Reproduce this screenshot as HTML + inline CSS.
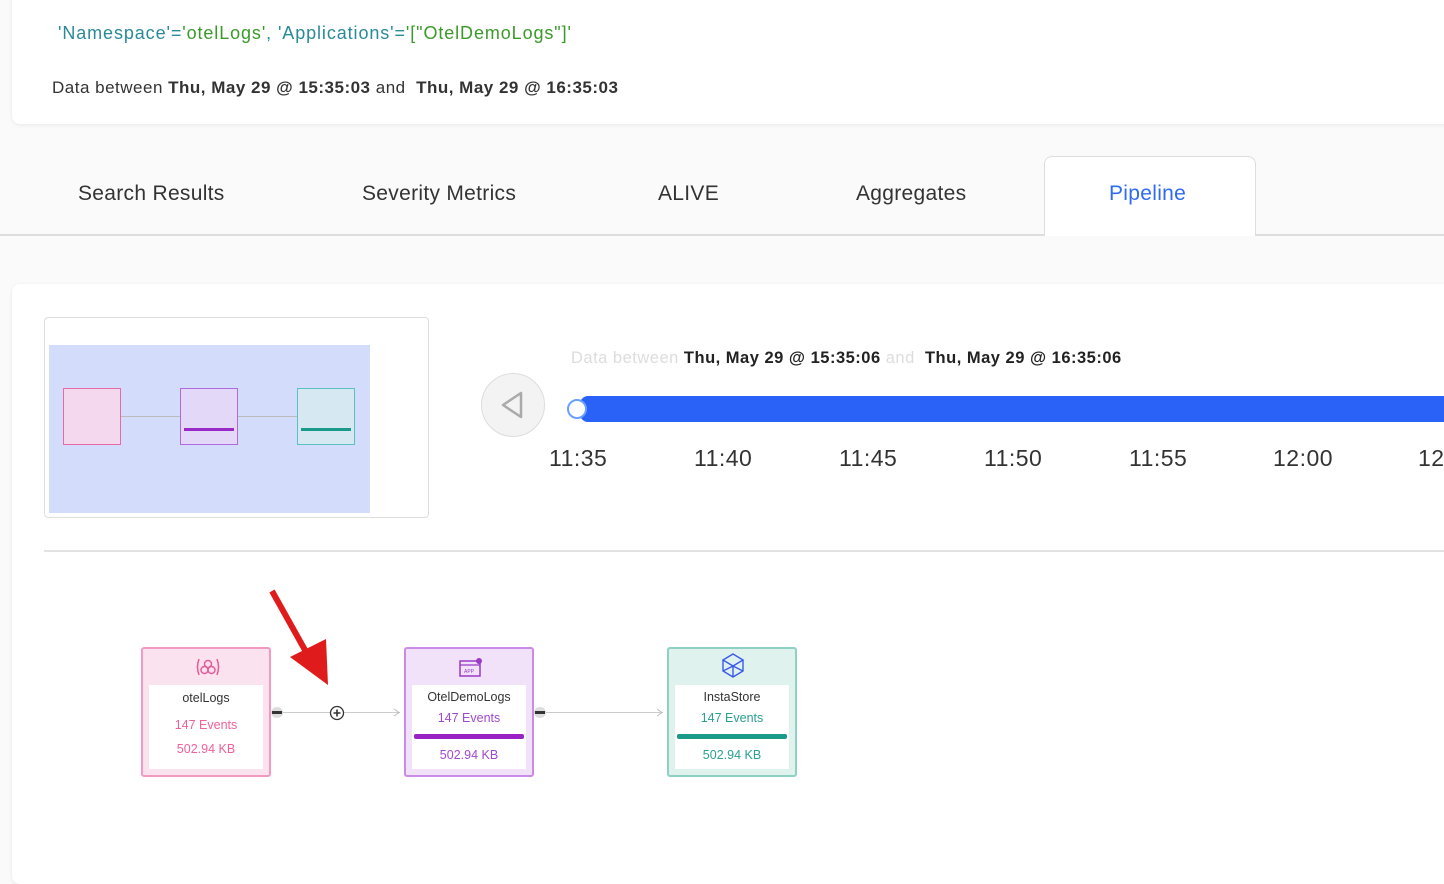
<!DOCTYPE html>
<html><head><meta charset="utf-8"><style>
*{box-sizing:border-box;margin:0;padding:0}
body{width:1444px;height:874px;overflow:hidden;background:#fafafa;font-family:"Liberation Sans",sans-serif;position:relative;color:#333}
.abs{position:absolute}
.card{background:#fff;border-radius:8px;box-shadow:0 1px 4px rgba(0,0,0,.08)}
.tab{position:absolute;top:182px;font-size:21px;color:#333;letter-spacing:.3px}
.node{position:absolute;top:647px;width:130px;height:130px;border:2px solid;border-radius:3px}
.node .in{position:absolute;left:6px;right:6px;top:36px;bottom:6px;background:#fff;text-align:center;font-size:12.5px}
.tick{position:absolute;top:445px;font-size:23px;color:#333;letter-spacing:.5px}
</style></head><body>
<div class="card abs" style="left:12px;top:-10px;width:1450px;height:134px"></div>
<div class="abs" style="left:58px;top:23px;font-size:18px;color:#2a8a9a;letter-spacing:.9px">'Namespace'=<span style="color:#3a9a2a">'otelLogs'</span>, 'Applications'=<span style="color:#3a9a2a">'["OtelDemoLogs"]'</span></div>
<div class="abs" style="left:52px;top:78px;font-size:17px;color:#333;letter-spacing:.5px">Data between <b>Thu, May 29 @ 15:35:03</b> and &nbsp;<b>Thu, May 29 @ 16:35:03</b></div>

<div class="abs" style="left:0;top:234px;width:1444px;height:2px;background:#ddd"></div>
<div class="abs" style="left:1044px;top:156px;width:212px;height:80px;background:#fff;border:1px solid #ddd;border-bottom:none;border-radius:8px 8px 0 0"></div>
<div class="tab" style="left:78px">Search Results</div>
<div class="tab" style="left:362px">Severity Metrics</div>
<div class="tab" style="left:658px">ALIVE</div>
<div class="tab" style="left:856px">Aggregates</div>
<div class="tab" style="left:1109px;color:#2f6bf0">Pipeline</div>

<div class="card abs" style="left:12px;top:284px;width:1450px;height:600px"></div>
<div class="abs" style="left:44px;top:317px;width:385px;height:201px;border:1px solid #ddd;border-radius:4px;background:#fff"></div>
<div class="abs" style="left:49px;top:345px;width:321px;height:168px;background:#d3dcfb"></div>
<div class="abs" style="left:63px;top:388px;width:58px;height:57px;border:1px solid #e56aa6;background:#f3d8ee"></div>
<div class="abs" style="left:180px;top:388px;width:58px;height:57px;border:1px solid #b06ae0;background:#e3d8f8"></div>
<div class="abs" style="left:184px;top:428px;width:50px;height:3px;background:#9a2ac8"></div>
<div class="abs" style="left:297px;top:388px;width:58px;height:57px;border:1px solid #5cc0c0;background:#d6e8f2"></div>
<div class="abs" style="left:301px;top:428px;width:50px;height:3px;background:#1a9a8a"></div>
<div class="abs" style="left:121px;top:416px;width:59px;height:1px;background:#bbb"></div>
<div class="abs" style="left:238px;top:416px;width:59px;height:1px;background:#bbb"></div>

<div class="abs" style="left:481px;top:373px;width:64px;height:64px;border-radius:50%;background:#f3f3f3;border:1px solid #ddd"></div>
<svg class="abs" style="left:481px;top:373px" width="64" height="64"><path d="M40 20 L40 44 L22 32 Z" fill="none" stroke="#aaa" stroke-width="2.5" stroke-linejoin="round"/></svg>

<div class="abs" style="left:571px;top:349px;font-size:16.5px;color:#ddd;letter-spacing:.5px">Data between <b style="color:#222">Thu, May 29 @ 15:35:06</b> and &nbsp;<b style="color:#222">Thu, May 29 @ 16:35:06</b></div>
<div class="abs" style="left:580px;top:396px;width:870px;height:26px;background:#2a62f8;border-radius:8px 0 0 8px"></div>
<div class="abs" style="left:567px;top:399px;width:20px;height:20px;border-radius:50%;background:#fff;border:2px solid #6aa0ff"></div>
<div class="tick" style="left:549px">11:35</div>
<div class="tick" style="left:694px">11:40</div>
<div class="tick" style="left:839px">11:45</div>
<div class="tick" style="left:984px">11:50</div>
<div class="tick" style="left:1129px">11:55</div>
<div class="tick" style="left:1273px">12:00</div>
<div class="tick" style="left:1418px">12:05</div>

<div class="abs" style="left:44px;top:550px;width:1400px;height:2px;background:#e2e2e2"></div>
<div class="abs" style="left:12px;top:552px;width:1432px;height:322px;background:#fff"></div>

<div class="abs" style="left:270px;top:712px;width:130px;height:1px;background:#ccc"></div>
<div class="abs" style="left:533px;top:712px;width:130px;height:1px;background:#ccc"></div>
<div class="abs" style="left:271px;top:707px;width:12px;height:11px;border-radius:50%;background:#ddd"></div>
<div class="abs" style="left:272px;top:711px;width:10px;height:3px;background:#333"></div>
<div class="abs" style="left:534px;top:707px;width:12px;height:11px;border-radius:50%;background:#ddd"></div>
<div class="abs" style="left:535px;top:711px;width:10px;height:3px;background:#333"></div>
<svg class="abs" style="left:328px;top:704px" width="18" height="18"><circle cx="9" cy="9" r="6.5" fill="#fff" stroke="#333" stroke-width="1.3"/><path d="M9 5.5V12.5M5.5 9H12.5" stroke="#333" stroke-width="1.6"/></svg>
<svg class="abs" style="left:393px;top:708px" width="8" height="9"><path d="M1 1L6 4.5L1 8" fill="none" stroke="#bbb"/></svg>
<svg class="abs" style="left:656px;top:708px" width="8" height="9"><path d="M1 1L6 4.5L1 8" fill="none" stroke="#bbb"/></svg>

<div class="node" style="left:141px;border-color:#f29ac2;background:#fbe2ef">
 <svg class="abs" style="left:52px;top:8px" width="26" height="20"><path d="M4 2Q1 10 4 18M22 2Q25 10 22 18" fill="none" stroke="#e85a9a" stroke-width="1.5"/><circle cx="13" cy="7" r="3.5" fill="none" stroke="#e85a9a" stroke-width="1.5"/><circle cx="9.5" cy="13" r="3.5" fill="none" stroke="#e85a9a" stroke-width="1.5"/><circle cx="16.5" cy="13" r="3.5" fill="none" stroke="#e85a9a" stroke-width="1.5"/></svg>
 <div class="in"><div style="margin-top:6px;color:#333">otelLogs</div><div style="margin-top:13px;color:#f0609a">147 Events</div><div style="margin-top:10px;color:#f0609a">502.94 KB</div></div>
</div>
<div class="node" style="left:404px;border-color:#c98be8;background:#f1e2fa">
 <svg class="abs" style="left:52px;top:8px" width="26" height="22"><rect x="2" y="4" width="20" height="15" fill="none" stroke="#9a3ac8" stroke-width="1.5"/><path d="M2 8H22" stroke="#9a3ac8" stroke-width="1.3"/><circle cx="21" cy="4" r="3" fill="#9a3ac8"/><text x="6" y="16" font-size="5" fill="#9a3ac8" font-family="Liberation Sans">APP</text></svg>
 <div class="in"><div style="margin-top:5px;color:#333">OtelDemoLogs</div><div style="margin-top:7px;color:#a04ad0">147 Events</div><div style="margin:9px 2px 0;height:5px;background:#9a22c4;border-radius:2px"></div><div style="margin-top:9px;color:#a04ad0">502.94 KB</div></div>
</div>
<div class="node" style="left:667px;border-color:#8fd0c4;background:#e0f2ee">
 <svg class="abs" style="left:50px;top:3px" width="28" height="28"><path d="M14 2L24 8L14 14L4 8Z M4 8V19L14 25L24 19V8 M14 14V25 M4 19L14 14L24 19" fill="none" stroke="#3a5ae8" stroke-width="1.4"/></svg>
 <div class="in"><div style="margin-top:5px;color:#333">InstaStore</div><div style="margin-top:7px;color:#2aa090">147 Events</div><div style="margin:9px 2px 0;height:5px;background:#1a9a88;border-radius:2px"></div><div style="margin-top:9px;color:#2aa090">502.94 KB</div></div>
</div>

<svg class="abs" style="left:260px;top:585px" width="80" height="105"><path d="M12 6L50 74" stroke="#e01b1b" stroke-width="6"/><path d="M30 72L68 100L66 54Z" fill="#e01b1b"/></svg>
</body></html>
